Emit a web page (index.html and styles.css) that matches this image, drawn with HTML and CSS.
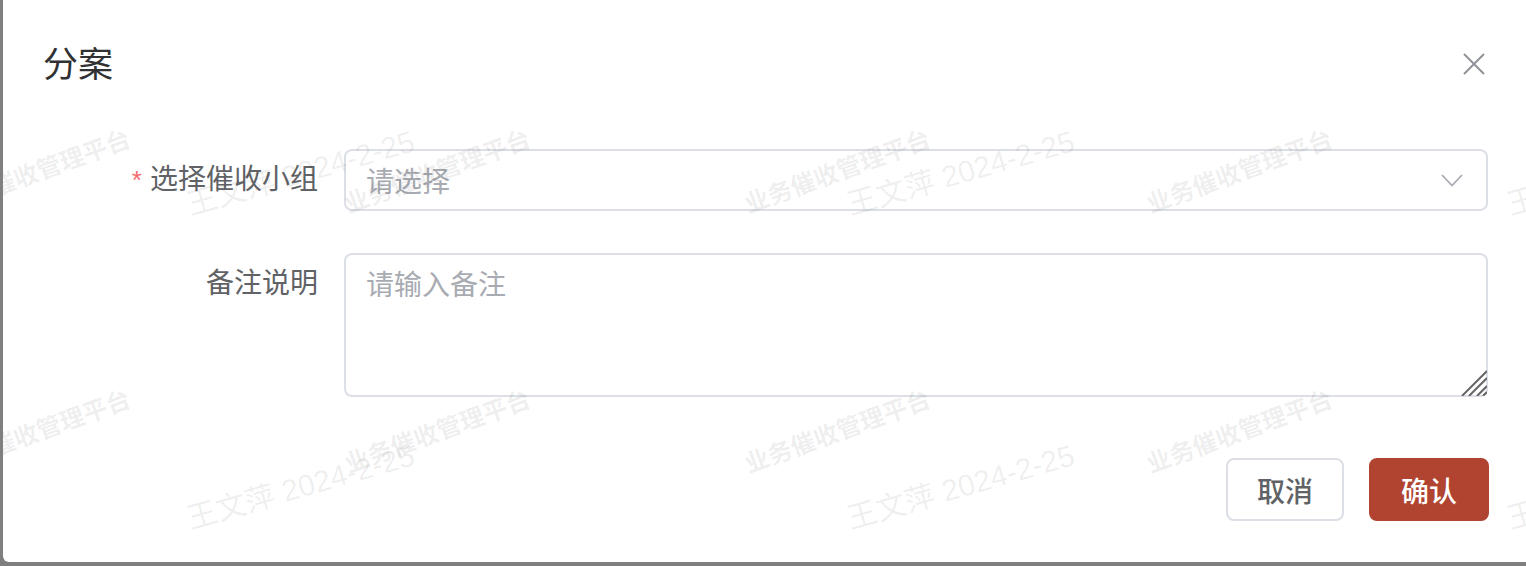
FILE: index.html
```html
<!DOCTYPE html>
<html lang="zh-CN">
<head>
  <meta charset="UTF-8" />
  <meta name="viewport" content="width=device-width, initial-scale=1.0"/>
  <title>分案</title>
  <link rel="stylesheet" href="styles.css">
</head>
<body>
  <div class="overlay">
    <div class="dialog">
      <header class="dialog-header">
        <span class="dialog-title">分案</span>
        <button class="dialog-close" aria-label="关闭">
          <svg viewBox="0 0 22 22" xmlns="http://www.w3.org/2000/svg"><path d="M1 1L21 21M21 1L1 21"/></svg>
        </button>
      </header>

      <div class="dialog-body">
        <form class="form">
          <div class="form-item">
            <label class="form-label is-required">选择催收小组</label>
            <div class="form-content">
              <div class="select">
                <span class="select-placeholder">请选择</span>
                <svg class="select-arrow" viewBox="0 0 22 13" xmlns="http://www.w3.org/2000/svg"><path d="M1 1L11 11.5L21 1"/></svg>
              </div>
            </div>
          </div>
          <div class="form-item">
            <label class="form-label">备注说明</label>
            <div class="form-content">
              <div class="textarea-wrap">
                <textarea class="textarea" placeholder="请输入备注"></textarea>
                <svg class="resize-grip" viewBox="0 0 26 26" xmlns="http://www.w3.org/2000/svg"><path d="M1 26L26 1M8 26L26 8M16 26L26 16M22 26L26 22"/></svg>
              </div>
            </div>
          </div>
        </form>
      </div>

      <footer class="dialog-footer">
        <button class="btn">取消</button>
        <button class="btn btn-primary">确认</button>
      </footer>

      <!-- watermark layer -->
      <div class="watermark">
        <span class="wm wm-app a1">业务催收管理平台</span>
        <span class="wm wm-app a2">业务催收管理平台</span>
        <span class="wm wm-app a3">业务催收管理平台</span>
        <span class="wm wm-app a4">业务催收管理平台</span>
        <span class="wm wm-app a5">业务催收管理平台</span>
        <span class="wm wm-app a6">业务催收管理平台</span>
        <span class="wm wm-app a7">业务催收管理平台</span>
        <span class="wm wm-app a8">业务催收管理平台</span>
        <span class="wm wm-user b1">王文萍 2024-2-25</span>
        <span class="wm wm-user b2">王文萍 2024-2-25</span>
        <span class="wm wm-user b3">王文萍 2024-2-25</span>
        <span class="wm wm-user b4">王文萍 2024-2-25</span>
        <span class="wm wm-user b5">王文萍 2024-2-25</span>
        <span class="wm wm-user b6">王文萍 2024-2-25</span>
      </div>
    </div>
  </div>
</body>
</html>
```

FILE: styles.css
```css
body {
  margin: 0;
  height: 566px;
  overflow: hidden;
  background: #7f7f7f;
  font-family: "Liberation Sans", "Noto Sans CJK SC", sans-serif;
}
.overlay {
  padding-left: 3px;
}
.dialog {
  position: relative;
  width: 1525px;
  height: 562px;
  background: #fff;
  border-bottom-left-radius: 6px;
  overflow: hidden;
}
.dialog-header {
  height: 128px;
  display: flex;
  align-items: center;
  justify-content: space-between;
  padding: 0 43px 0 40px;
}
.dialog-title {
  font-size: 35px;
  line-height: 1;
  color: #303133;
}
.dialog-close {
  width: 22px;
  height: 22px;
  padding: 0;
  border: none;
  background: none;
  display: flex;
}
.dialog-close svg {
  width: 100%;
  height: 100%;
  stroke: #909399;
  stroke-width: 2;
  fill: none;
}
.dialog-body {
  padding: 21px 40px 0 41px;
}
.form-item {
  display: flex;
  align-items: flex-start;
  margin-bottom: 42px;
}
.form-item:last-child {
  margin-bottom: 0;
}
.form-label {
  flex: none;
  width: 300px;
  box-sizing: border-box;
  padding-right: 26px;
  text-align: right;
  font-size: 28px;
  line-height: 62px;
  color: #606266;
}
.form-label.is-required::before {
  content: "*";
  color: #f56c6c;
  margin-right: 8px;
  font-size: 26px;
}
.form-content {
  flex: 1;
}
.select {
  height: 62px;
  box-sizing: border-box;
  border: 2px solid #dcdfe6;
  border-radius: 8px;
  display: flex;
  align-items: center;
  justify-content: space-between;
  padding: 0 23px 0 20px;
}
.select-placeholder {
  font-size: 28px;
  color: #a8abb2;
}
.select-arrow {
  width: 22px;
  height: 13px;
  stroke: #a8abb2;
  stroke-width: 1.8;
  fill: none;
}
.textarea-wrap {
  position: relative;
  display: flex;
}
.textarea {
  flex: 1;
  height: 144px;
  box-sizing: border-box;
  border: 2px solid #dcdfe6;
  border-radius: 8px;
  padding: 10px 20px;
  font-family: inherit;
  font-size: 28px;
  line-height: 42px;
  color: #606266;
  resize: none;
  outline: none;
}
.textarea::placeholder {
  color: #a8abb2;
}
.resize-grip {
  position: absolute;
  right: 1px;
  bottom: 1px;
  width: 26px;
  height: 26px;
  stroke: #666;
  stroke-width: 2;
  fill: none;
}
.dialog-footer {
  display: flex;
  justify-content: flex-end;
  gap: 25px;
  padding: 61px 39px 0 0;
}
.btn {
  height: 63px;
  padding: 0 29px;
  border: 2px solid #dcdfe6;
  border-radius: 8px;
  background: #fff;
  color: #606266;
  font-family: inherit;
  font-size: 28px;
  font-weight: 500;
}
.btn-primary {
  padding: 0 30px;
  background: #b04430;
  border-color: #b04430;
  color: #fff;
}

/* watermark */
.watermark {
  position: absolute;
  inset: 0;
  pointer-events: none;
}
.wm {
  position: absolute;
  line-height: 1;
  white-space: nowrap;
  transform-origin: 0 100%;
  color: rgba(0, 0, 0, 0.075);
}
.wm-app {
  font-size: 24.5px;
  font-weight: 700;
  transform: rotate(-20deg);
}
.wm-user {
  font-size: 30px;
  transform: rotate(-16deg);
}
.a1 { left: -53px; top: 193px; }
.a2 { left: 347px; top: 193px; }
.a3 { left: 747px; top: 193px; }
.a4 { left: 1149px; top: 193px; }
.a5 { left: -53px; top: 453px; }
.a6 { left: 347px; top: 453px; }
.a7 { left: 747px; top: 453px; }
.a8 { left: 1149px; top: 453px; }
.b1 { left: 189px; top: 190px; }
.b2 { left: 849px; top: 190px; }
.b3 { left: 1509px; top: 190px; }
.b4 { left: 189px; top: 504px; }
.b5 { left: 849px; top: 504px; }
.b6 { left: 1509px; top: 504px; }
```
